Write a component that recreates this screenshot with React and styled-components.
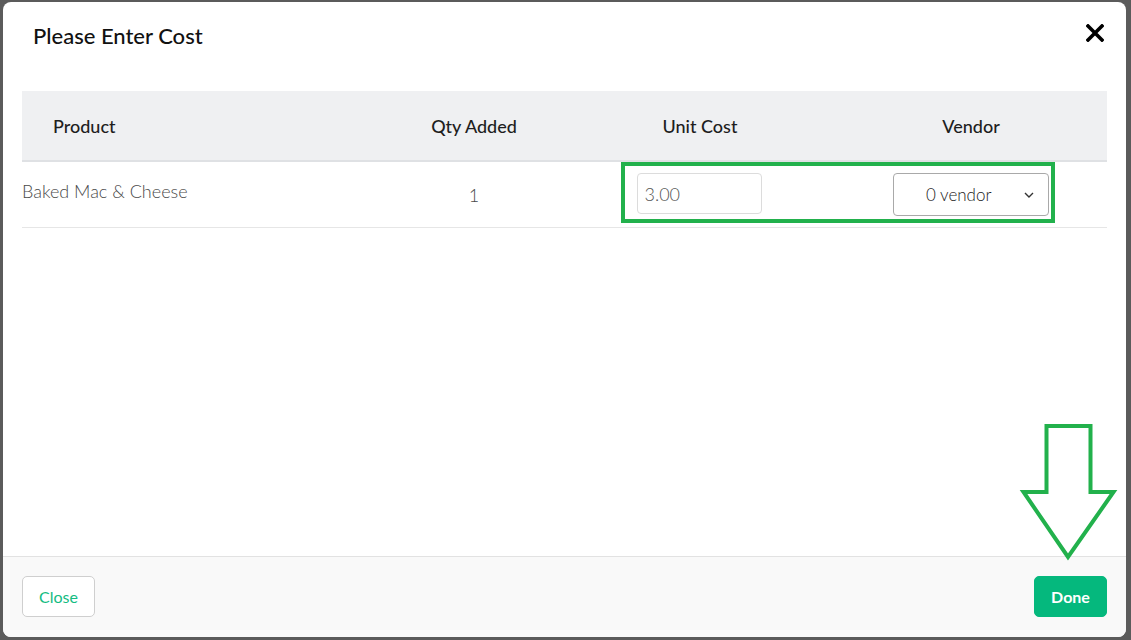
import React from "react"
import styled, { createGlobalStyle } from "styled-components"

const GlobalStyle = createGlobalStyle`
  html, body {
    margin: 0;
    padding: 0;
    background: #5b5b5b;
    font-family: "Lato", "Open Sans", sans-serif;
  }
  * { box-sizing: border-box; }
`

const columns = "361px 182px 270px 272px"

const Page = styled.div`
  width: 1131px;
  height: 640px;
  padding: 2px 5px 3px 3px;
`

const Modal = styled.div`
  position: relative;
  width: 1123px;
  height: 635px;
  background: #fff;
  border-radius: 8px;
  overflow: hidden;
  display: flex;
  flex-direction: column;
`

const Header = styled.div`
  height: 70px;
  padding: 0 21px 4px 30px;
  display: flex;
  align-items: center;
  justify-content: space-between;
  h2 {
    margin: 0;
    font-size: 22px;
    font-weight: 500;
    color: #111;
  }
`

const CloseX = styled.button`
  border: 0;
  background: none;
  padding: 0;
  width: 20px;
  height: 20px;
  cursor: pointer;
  margin-top: -2px;
`

const Body = styled.div`
  flex: 1;
  padding: 19px 19px 0 19px;
`

const HeadRow = styled.div`
  display: grid;
  grid-template-columns: ${columns};
  height: 71px;
  background: #eff0f2;
  border-bottom: 2px solid #dfe1e4;
`

const HeadCell = styled.div`
  display: flex;
  align-items: center;
  justify-content: ${(p) => (p.left ? "flex-start" : "center")};
  padding-left: ${(p) => (p.left ? "31px" : "0")};
  font-size: 18px;
  font-weight: 500;
  color: #1e1e1e;
`

const Row = styled.div`
  position: relative;
  display: grid;
  grid-template-columns: ${columns};
  height: 66px;
  border-bottom: 1px solid #e6e6e6;
`

const Cell = styled.div`
  display: flex;
  align-items: center;
  justify-content: ${(p) => (p.left ? "flex-start" : "center")};
  font-size: 18px;
  font-weight: 300;
  color: #4a4a4a;
  padding-bottom: ${(p) => (p.left ? "8px" : "0")};
`

const CostInput = styled.input`
  width: 125px;
  height: 41px;
  margin: 0 2px 2px 0;
  border: 1px solid #dcdcdc;
  border-radius: 4px;
  padding: 0 7px;
  font-family: "Lato", sans-serif;
  font-size: 18px;
  font-weight: 300;
  color: #555;
  outline: none;
`

const VendorSelect = styled.div`
  width: 156px;
  height: 43px;
  border: 1px solid #a9a9a9;
  border-radius: 4px;
  display: flex;
  align-items: center;
  justify-content: space-between;
  padding: 0 14px 0 32px;
  font-size: 17px;
  color: #222;
`

const Highlight = styled.div`
  position: absolute;
  left: 599px;
  top: 0;
  width: 434px;
  height: 61px;
  border: 4px solid #22b14c;
  pointer-events: none;
`

const Footer = styled.div`
  height: 81px;
  background: #f9f9f9;
  border-top: 1px solid #e2e2e2;
  padding: 0 19px;
  display: flex;
  align-items: center;
  justify-content: space-between;
`

const Button = styled.button`
  height: 41px;
  min-width: 73px;
  padding: 0 14px;
  margin-bottom: 1px;
  border-radius: 5px;
  font-family: "Lato", sans-serif;
  font-size: 16px;
  font-weight: ${(p) => (p.primary ? 700 : 400)};
  border: 1px solid ${(p) => (p.primary ? "#05b87d" : "#cfcfcf")};
  background: ${(p) => (p.primary ? "#05b87d" : "#fff")};
  color: ${(p) => (p.primary ? "#fff" : "#14bc82")};
  cursor: pointer;
`

const Arrow = styled.svg`
  position: absolute;
  left: 1016px;
  top: 420px;
  pointer-events: none;
`

export default function App() {
  return (
    <>
      <GlobalStyle />
      <Page>
        <Modal>
          <Header>
            <h2>Please Enter Cost</h2>
            <CloseX aria-label="close">
              <svg width="18" height="18" viewBox="0 0 18 18">
                <path d="M2 2 L16 16 M16 2 L2 16" stroke="#000" strokeWidth="3.6" strokeLinecap="square" />
              </svg>
            </CloseX>
          </Header>
          <Body>
            <HeadRow>
              <HeadCell left>Product</HeadCell>
              <HeadCell>Qty Added</HeadCell>
              <HeadCell>Unit Cost</HeadCell>
              <HeadCell>Vendor</HeadCell>
            </HeadRow>
            <Row>
              <Cell left>Baked Mac &amp; Cheese</Cell>
              <Cell>1</Cell>
              <Cell>
                <CostInput defaultValue="3.00" />
              </Cell>
              <Cell>
                <VendorSelect>
                  <span>0 vendor</span>
                  <svg width="10" height="6" viewBox="0 0 10 6">
                    <path d="M1 1 L5 5 L9 1" fill="none" stroke="#333" strokeWidth="1.4" />
                  </svg>
                </VendorSelect>
              </Cell>
              <Highlight />
            </Row>
          </Body>
          <Footer>
            <Button>Close</Button>
            <Button primary>Done</Button>
          </Footer>
          <Arrow width="100" height="142" viewBox="0 0 100 142">
            <polygon
              points="27.5,4 71.5,4 71.5,70 94.5,70 49,135 4.5,70 27.5,70"
              fill="#fff"
              stroke="#22b14c"
              strokeWidth="4"
            />
          </Arrow>
        </Modal>
      </Page>
    </>
  )
}
